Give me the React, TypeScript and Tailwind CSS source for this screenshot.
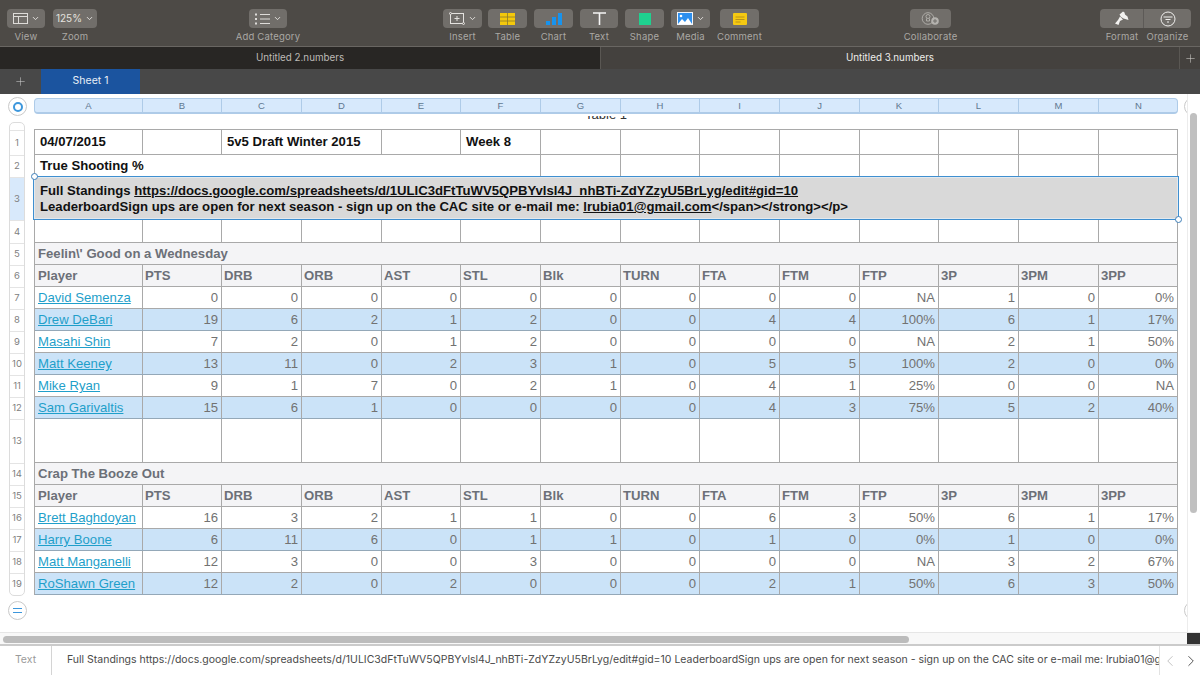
import type { ReactNode } from "react";
import { ChevronDown, ChevronLeft, ChevronRight, Plus } from "lucide-react";

const GRID =
  "grid grid-cols-[108px_79px_80px_80px_79px_80px_80px_79px_80px_80px_79px_80px_80px_79px]";

const COLUMNS = ["A", "B", "C", "D", "E", "F", "G", "H", "I", "J", "K", "L", "M", "N"];
const HEADERS = ["PTS", "DRB", "ORB", "AST", "STL", "Blk", "TURN", "FTA", "FTM", "FTP", "3P", "3PM", "3PP"];

type Player = { n: number; name: string; stats: string[] };

const TEAM_1: Player[] = [
  { n: 7, name: "David Semenza", stats: ["0", "0", "0", "0", "0", "0", "0", "0", "0", "NA", "1", "0", "0%"] },
  { n: 8, name: "Drew DeBari", stats: ["19", "6", "2", "1", "2", "0", "0", "4", "4", "100%", "6", "1", "17%"] },
  { n: 9, name: "Masahi Shin", stats: ["7", "2", "0", "1", "2", "0", "0", "0", "0", "NA", "2", "1", "50%"] },
  { n: 10, name: "Matt Keeney", stats: ["13", "11", "0", "2", "3", "1", "0", "5", "5", "100%", "2", "0", "0%"] },
  { n: 11, name: "Mike Ryan", stats: ["9", "1", "7", "0", "2", "1", "0", "4", "1", "25%", "0", "0", "NA"] },
  { n: 12, name: "Sam Garivaltis", stats: ["15", "6", "1", "0", "0", "0", "0", "4", "3", "75%", "5", "2", "40%"] },
];

const TEAM_2: Player[] = [
  { n: 16, name: "Brett Baghdoyan", stats: ["16", "3", "2", "1", "1", "0", "0", "6", "3", "50%", "6", "1", "17%"] },
  { n: 17, name: "Harry Boone", stats: ["6", "11", "6", "0", "1", "1", "0", "1", "0", "0%", "1", "0", "0%"] },
  { n: 18, name: "Matt Manganelli", stats: ["12", "3", "0", "0", "3", "0", "0", "0", "0", "NA", "3", "2", "67%"] },
  { n: 19, name: "RoShawn Green", stats: ["12", "2", "0", "2", "0", "0", "0", "2", "1", "50%", "6", "3", "50%"] },
];

// row number, height class
const ROW_HEIGHTS: [number, string][] = [
  [1, "h-[25px]"], [2, "h-[22px]"], [3, "h-[43px]"], [4, "h-[23px]"], [5, "h-[22px]"],
  [6, "h-[22px]"], [7, "h-[22px]"], [8, "h-[22px]"], [9, "h-[22px]"], [10, "h-[22px]"],
  [11, "h-[22px]"], [12, "h-[22px]"], [13, "h-[44px]"], [14, "h-[22px]"], [15, "h-[22px]"],
  [16, "h-[22px]"], [17, "h-[22px]"], [18, "h-[22px]"], [19, "h-[22px]"],
];

function Tool({ label, btn, children }: { label: string; btn: string; children: ReactNode }) {
  return (
    <div className={`flex flex-col items-center ${btn}`}>
      <div className="flex h-[19px] w-full items-center justify-center gap-[3px] rounded-[4px] bg-[#716e6a]">
        {children}
      </div>
      <div className="mt-[3px] whitespace-nowrap text-[9.5px] leading-[12px] tracking-[0.2px] text-[#aaa8a4]">
        {label}
      </div>
    </div>
  );
}

const Chevron = () => <ChevronDown size={9} strokeWidth={2.5} className="text-[#e4e2df]" />;

function Toolbar() {
  return (
    <div className="flex h-[47px] shrink-0 border-b border-[#696662] bg-[#4d4a46] pl-[7px] pt-[9px]">
      <Tool label="View" btn="w-[38px]">
        <svg width="15" height="11" viewBox="0 0 15 11" fill="none" stroke="#dedcd9" strokeWidth="1">
          <rect x="0.5" y="0.5" width="14" height="10" />
          <path d="M0.5 3.5h14M5.5 3.5v7" />
        </svg>
        <Chevron />
      </Tool>
      <div className="ml-[8px]">
        <Tool label="Zoom" btn="w-[44px]">
          <span className="text-[10px] text-[#e4e2df]">125%</span>
          <Chevron />
        </Tool>
      </div>
      <div className="ml-[152px]">
        <Tool label="Add Category" btn="w-[38px]">
          <svg width="15" height="12" viewBox="0 0 15 12" fill="none" stroke="#dedcd9">
            <path d="M5 1.5h10M5 6h10M5 10.5h10" />
            <path d="M1 .5v2M1 5v2M1 9.5v2" strokeWidth="2" />
          </svg>
          <Chevron />
        </Tool>
      </div>
      <div className="ml-[156px]">
        <Tool label="Insert" btn="w-[39px]">
          <svg width="16" height="13" viewBox="0 0 16 13" fill="none" stroke="#e4e2df">
            <rect x="1.5" y="1.5" width="13" height="10" />
            <path d="M8 4v5M5.5 6.500h5" />
            <circle cx="1.5" cy="1.500" r="1" fill="#716e6a" />
            <circle cx="14.500" cy="11.500" r="1" fill="#716e6a" />
          </svg>
          <Chevron />
        </Tool>
      </div>
      <div className="ml-[6px]">
        <Tool label="Table" btn="w-[39px]">
          <svg width="15" height="12" viewBox="0 0 15 12">
            <rect width="15" height="12" fill="#f3c80c" />
            <path d="M0 4h15M0 8h15M7.500 0v12" stroke="#8a7a2c" strokeWidth="0.8" />
          </svg>
        </Tool>
      </div>
      <div className="ml-[7px]">
        <Tool label="Chart" btn="w-[39px]">
          <svg width="16" height="12" viewBox="0 0 16 12" fill="#1793ee">
            <rect x="0" y="8" width="4" height="4" />
            <rect x="6" y="4" width="4" height="8" />
            <rect x="12" y="0" width="4" height="12" />
          </svg>
        </Tool>
      </div>
      <div className="ml-[7px]">
        <Tool label="Text" btn="w-[38px]">
          <svg width="13" height="13" viewBox="0 0 13 13" fill="none" stroke="#f5f5f5" strokeWidth="1.600">
            <path d="M0 1h13M6.500 1v12" />
          </svg>
        </Tool>
      </div>
      <div className="ml-[7px]">
        <Tool label="Shape" btn="w-[39px]">
          <div className="h-[12px] w-[12px] bg-[#1fd18f]" />
        </Tool>
      </div>
      <div className="ml-[7px]">
        <Tool label="Media" btn="w-[39px]">
          <svg width="16" height="13" viewBox="0 0 16 13">
            <rect width="16" height="13" fill="#f0f4fa" />
            <rect x="1" y="1" width="14" height="11" fill="#2d8fee" />
            <path d="M1 12l4-5 3 3 3-4 4 6z" fill="#ffffff" />
            <circle cx="4" cy="4" r="1.300" fill="#ffffff" />
          </svg>
          <Chevron />
        </Tool>
      </div>
      <div className="ml-[10px]">
        <Tool label="Comment" btn="w-[39px]">
          <svg width="14" height="12" viewBox="0 0 14 12">
            <rect width="14" height="12" rx="1" fill="#f5c912" />
            <path d="M2.500 4h9M2.500 6.500h9M2.500 9h5" stroke="#a9861b" strokeWidth="0.800" />
          </svg>
        </Tool>
      </div>
      <div className="ml-[151px]">
        <Tool label="Collaborate" btn="w-[41px]">
          <svg width="19" height="14" viewBox="0 0 19 14" fill="none" stroke="#b4b2ae" strokeWidth="0.900">
            <circle cx="7" cy="6.500" r="5.800" />
            <circle cx="7" cy="4.500" r="2" />
            <path d="M5.500 6.500v2.500h3v-2.500" />
            <circle cx="14" cy="9" r="3.800" fill="#b4b2ae" stroke="none" />
            <path d="M14 7v4M12 9h4" stroke="#716e6a" strokeWidth="1" />
          </svg>
        </Tool>
      </div>
      <div className="ml-[149px] flex flex-col">
        <div className="flex h-[19px] w-[91px] rounded-[4px] bg-[#716e6a]">
          <div className="flex w-[44px] items-center justify-center border-r border-[#5d5a57]">
            <svg width="15" height="15" viewBox="0 0 15 15" fill="#f2f1ef">
              <path d="M9 0.500l1.500 1 .5 2 2.500 2 1 3.500-5-1.500-2.500-1.500-1.500-2.500z" />
              <path d="M6 5.500l3 3-3 1.500-1.500 4-3.500-1.500 3-3.500z" />
            </svg>
          </div>
          <div className="flex flex-1 items-center justify-center">
            <svg width="16" height="16" viewBox="0 0 16 16" fill="none" stroke="#f0efed">
              <circle cx="8" cy="8" r="7" />
              <path d="M3.500 6h9M5.500 8.500h5M7 11h2" />
            </svg>
          </div>
        </div>
        <div className="mt-[3px] flex text-[9.5px] leading-[12px] tracking-[0.2px] text-[#aaa8a4]">
          <div className="w-[44px] text-center">Format</div>
          <div className="flex-1 text-center">Organize</div>
        </div>
      </div>
    </div>
  );
}

function Tabs() {
  return (
    <div className="flex h-[22px] shrink-0 text-[9.8px] leading-[22px]">
      <div className="w-[600px] bg-[#282624] text-center text-[#bdbab6]">Untitled 2.numbers</div>
      <div className="flex-1 border-l border-[#5a5753] bg-[#44413e] text-center text-[#eeedeb]">Untitled 3.numbers</div>
      <div className="flex w-[21px] items-center justify-center border-l border-[#5a5753] bg-[#44413e]">
        <Plus size={13} strokeWidth={1} className="text-[#d6d4d1]" />
      </div>
    </div>
  );
}

function SheetBar() {
  return (
    <div className="flex h-[25px] shrink-0 bg-[#484848]">
      <div className="flex w-[41px] items-center justify-center">
        <Plus size={13} strokeWidth={1} className="text-[#cfcfcf]" />
      </div>
      <div className="w-[99px] bg-[#1b549f] text-center text-[10.5px] leading-[23px] text-[#e8eef6]">Sheet 1</div>
    </div>
  );
}

function TextCell({ className = "", children }: { className?: string; children?: ReactNode }) {
  return <div className={`overflow-hidden whitespace-nowrap border-r border-[#a9a9a9] ${className}`}>{children}</div>;
}

function Blanks({ count }: { count: number }) {
  return (
    <>
      {Array.from({ length: count }, (_, i) => (
        <TextCell key={i} />
      ))}
    </>
  );
}

function HeaderRow() {
  return (
    <div className={`${GRID} h-[22px] border-b border-[#a9a9a9] bg-[#f4f4f6] font-bold leading-[21px] text-[#6c7078]`}>
      <TextCell className="pl-[3px]">Player</TextCell>
      {HEADERS.map((h) => (
        <TextCell key={h} className="pl-[2px]">
          {h}
        </TextCell>
      ))}
    </div>
  );
}

function PlayerRows({ players }: { players: Player[] }) {
  return (
    <>
      {players.map((p, i) => (
        <div
          key={p.n}
          className={`${GRID} h-[22px] border-b leading-[21px] text-[#727272] ${
            i % 2 === 1 ? "border-[#94a8b8] bg-[#cbe3f8]" : "border-[#a9a9a9] bg-white"
          }`}
        >
          <TextCell className="pl-[3px]">
            <span className="text-[#1f9fca] underline">{p.name}</span>
          </TextCell>
          {p.stats.map((s, j) => (
            <TextCell key={j} className="pr-[3px] text-right">
              {s}
            </TextCell>
          ))}
        </div>
      ))}
    </>
  );
}

function TitleRow({ title }: { title: string }) {
  return (
    <div className="h-[22px] border-b border-r border-[#a9a9a9] bg-[#f4f4f6] pl-[3px] font-bold leading-[21px] text-[#6c7078]">
      {title}
    </div>
  );
}

function Table() {
  return (
    <div className="w-[1144px] border-l border-t border-[#a9a9a9] font-['Liberation_Sans',Arial,sans-serif] text-[13.15px]">
      <div className={`${GRID} h-[25px] border-b border-[#a9a9a9] font-bold leading-[24px] text-[#111]`}>
        <TextCell className="pl-[5px]">04/07/2015</TextCell>
        <TextCell />
        <TextCell className="col-span-2 pl-[5px]">5v5 Draft Winter 2015</TextCell>
        <TextCell />
        <TextCell className="pl-[5px]">Week 8</TextCell>
        <Blanks count={8} />
      </div>
      <div className={`${GRID} h-[22px] border-b border-[#a9a9a9] font-bold leading-[22px] text-[#111]`}>
        <TextCell className="col-span-6 pl-[5px]">True Shooting %</TextCell>
        <Blanks count={8} />
      </div>
      <div className="relative h-[43px] border-b border-r border-[#a9a9a9] bg-[#d9d9d9] pl-[5px] pt-[6px] font-bold leading-[16px] text-[#111]">
        <div className="whitespace-nowrap">
          Full Standings <u>https://docs.google.com/spreadsheets/d/1ULIC3dFtTuWV5QPBYvlsl4J_nhBTi-ZdYZzyU5BrLyg/edit#gid=10</u>
        </div>
        <div className="whitespace-nowrap">
          LeaderboardSign ups are open for next season - sign up on the CAC site or e-mail me: <u>lrubia01@gmail.com</u>
          {"</span></strong></p>"}
        </div>
        <div className="absolute -bottom-px -left-[2px] -right-[2px] -top-px border border-[#3f8fd0] shadow-[inset_0_0_0_1px_#e3e9ee]" />
        <div className="absolute -left-[4px] -top-[4px] h-[7px] w-[7px] rounded-full border border-[#3f7fb8] bg-white" />
        <div className="absolute -bottom-[4px] -right-[5px] h-[7px] w-[7px] rounded-full border border-[#3f7fb8] bg-white" />
      </div>
      <div className={`${GRID} h-[23px] border-b border-[#a9a9a9]`}>
        <Blanks count={14} />
      </div>
      <TitleRow title="Feelin\' Good on a Wednesday" />
      <HeaderRow />
      <PlayerRows players={TEAM_1} />
      <div className={`${GRID} h-[44px] border-b border-[#a9a9a9]`}>
        <Blanks count={14} />
      </div>
      <TitleRow title="Crap The Booze Out" />
      <HeaderRow />
      <PlayerRows players={TEAM_2} />
    </div>
  );
}

function RowNumbers() {
  return (
    <div className="w-[16px] overflow-hidden rounded-[5px] border-x border-b border-t border-[#dcdcdc] bg-white">
      <div className="h-[7px]" />
      {ROW_HEIGHTS.map(([n, h]) => (
        <div
          key={n}
          className={`flex items-center justify-center border-t border-[#e4e4e4] text-[9.5px] text-[#808080] ${h} ${
            n === 3 ? "bg-[#d8e9fb]" : ""
          }`}
        >
          {n}
        </div>
      ))}
    </div>
  );
}

function Sheet() {
  return (
    <div className="flex min-h-0 flex-1 bg-white font-['Inter',sans-serif]">
      <div className="min-w-0 flex-1 overflow-hidden">
        <div className="flex pt-[3px]">
          <div className="ml-[8px] mr-[7px] flex h-[19px] w-[19px] shrink-0 items-center justify-center rounded-full border border-[#c9c9c9]">
            <div className="h-[10px] w-[10px] rounded-full border-2 border-[#3d97dc]" />
          </div>
          <div className="mt-px w-[1144px] shrink-0">
            <div className={`${GRID} h-[16px] overflow-hidden rounded-[4px] border-x border-b-2 border-t border-[#aecbe8] bg-[#d7e9fc] text-center font-['Liberation_Sans',sans-serif] text-[9.5px] leading-[13px] text-[#5f7891]`}>
              {COLUMNS.map((c, i) => (
                <div key={c} className={i < 13 ? "border-r border-[#aecbe8]" : ""}>
                  {c}
                </div>
              ))}
            </div>
          </div>
          <div className="ml-[6px] h-[19px] w-[19px] shrink-0 rounded-full border border-[#c9c9c9]" />
        </div>
        <div className="flex">
          <div className="w-[34px] shrink-0 pl-[9px] pt-[6px]">
            <RowNumbers />
            <div className="-ml-px mt-[5px] flex h-[19px] w-[19px] items-center justify-center rounded-full border border-[#c9c9c9]">
              <div className="h-[5px] w-[9px] border-y border-[#3d97dc]" />
            </div>
          </div>
          <div className="shrink-0">
            <div className="flex h-[13px] justify-center overflow-hidden font-['Liberation_Sans',sans-serif] text-[13px] leading-[15px] text-[#333]">
              <span className="-mt-[9px]">Table 1</span>
            </div>
            <Table />
            <div className="-mr-[25px] mt-[6px] flex justify-end">
              <div className="h-[19px] w-[19px] rounded-full border border-[#c9c9c9]" />
            </div>
          </div>
        </div>
      </div>
      <div className="w-[13px] shrink-0 border-l border-[#ececec] pl-[2px] pt-[19px]">
        <div className="h-[400px] w-[7px] rounded-full bg-[#c0c0c0]" />
      </div>
    </div>
  );
}

function HorizontalScroll() {
  return (
    <div className="flex h-[12px] shrink-0 border-t border-[#e6e6e6] bg-[#f8f8f8]">
      <div className="flex-1 pl-[3px] pt-[3px]">
        <div className="h-[7px] w-[906px] rounded-full bg-[#bcbcbc]" />
      </div>
      <div className="w-[13px] bg-[#333333]" />
    </div>
  );
}

function FormulaBar() {
  return (
    <div className="flex h-[31px] shrink-0 border-t-2 border-[#cbcbcb] bg-white font-['Inter',sans-serif] text-[10.5px] leading-[28px]">
      <div className="w-[52px] border-r border-[#d4d4d4] text-center text-[#9a9a9a]">Text</div>
      <div className="min-w-0 flex-1 overflow-hidden whitespace-nowrap pl-[15px] text-[#4a4a4a]">
        Full Standings https://docs.google.com/spreadsheets/d/1ULIC3dFtTuWV5QPBYvlsl4J_nhBTi-ZdYZzyU5BrLyg/edit#gid=10 LeaderboardSign ups are open for next season - sign up on the CAC site or e-mail me: lrubia01@gmail.com
      </div>
      <div className="flex w-[41px] items-center justify-center gap-[3px] border-l border-[#e2e2e2]">
        <ChevronLeft size={18} strokeWidth={1.2} className="text-[#bdbdbd]" />
        <ChevronRight size={18} strokeWidth={1.2} className="text-[#444]" />
      </div>
    </div>
  );
}

export default function App() {
  return (
    <div className="flex h-[675px] w-[1200px] flex-col overflow-hidden font-['Inter',sans-serif]">
      <Toolbar />
      <Tabs />
      <SheetBar />
      <Sheet />
      <HorizontalScroll />
      <FormulaBar />
    </div>
  );
}
